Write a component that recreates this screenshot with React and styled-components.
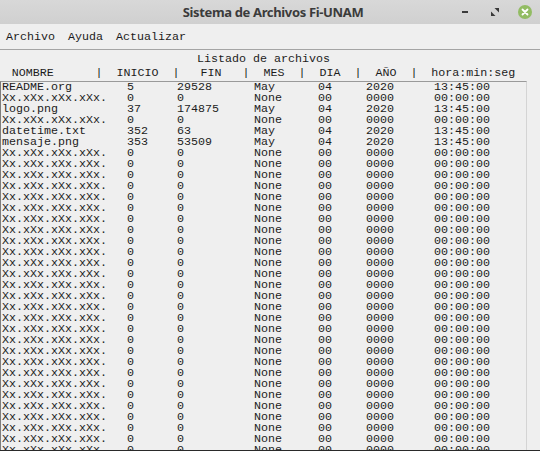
import React from 'react'
import styled, { createGlobalStyle } from 'styled-components'

const Global = createGlobalStyle`
  html, body {
    margin: 0;
    padding: 0;
    background: #efefef;
  }
  #root {
    width: 540px;
    height: 451px;
    overflow: hidden;
  }
`

const Window = styled.div`
  width: 540px;
  height: 451px;
  box-sizing: border-box;
  display: flex;
  flex-direction: column;
  background: #efefef;
  border-bottom: 1px solid #2a2a2a;
  font-family: "Liberation Mono", monospace;
  font-size: 11.67px;
  color: #1c1c1c;
`

const TitleBar = styled.div`
  height: 24px;
  flex: none;
  display: flex;
  align-items: center;
  justify-content: center;
  position: relative;
  background: linear-gradient(#d8d8d8, #d0d0d0);
`

const Title = styled.div`
  font-family: "Noto Sans", sans-serif;
  font-weight: 700;
  font-size: 13px;
  color: #3b3b3b;
  letter-spacing: -0.35px;
  padding-left: 6px;
`

const Controls = styled.div`
  position: absolute;
  right: 0;
  top: 0;
  height: 24px;
  display: flex;
`

const ControlButton = styled.div`
  width: 30px;
  height: 24px;
  display: flex;
  align-items: center;
  justify-content: center;
`

const Minimize = styled.span`
  width: 6px;
  height: 2px;
  background: #3a3a3a;
`

const Close = styled.span`
  width: 14px;
  height: 14px;
  border-radius: 50%;
  background: #92bc63;
  display: flex;
  align-items: center;
  justify-content: center;
`

const MenuBar = styled.div`
  height: 25px;
  flex: none;
  display: flex;
  align-items: center;
  gap: 1px;
  border-bottom: 1px solid #a4a4a4;
`

const MenuItem = styled.span`
  padding: 0 6px;
`

const Content = styled.div`
  width: 527px;
  flex: 1;
  min-height: 0;
  display: flex;
  flex-direction: column;
  padding-top: 2px;
`

const Caption = styled.div`
  height: 14px;
  line-height: 14px;
  text-align: center;
  white-space: pre;
`

const Header = styled(Caption)`
  margin-bottom: 1px;
`

const ListBox = styled.div`
  flex: 1;
  min-height: 0;
  overflow: hidden;
  border-top: 1px solid #9a9a9a;
  border-left: 1px solid #7d7d7d;
  border-right: 1px solid #d4d4d4;
  background: #efefef;
`

const Row = styled.div`
  height: 11px;
  line-height: 11px;
  padding-left: 1px;
  display: grid;
  grid-template-columns: 125px 50px 77px 64px 48px 68px auto;
  white-space: pre;
`

const header = 'NOMBRE      |  INICIO  |   FIN   |  MES  |  DIA  |  AÑO  |  hora:min:seg'

const empty = ['Xx.xXx.xXx.xXx.', '0', '0', 'None', '00', '0000', '00:00:00']
const files = [
  ['README.org', '5', '29528', 'May', '04', '2020', '13:45:00'],
  empty,
  ['logo.png', '37', '174875', 'May', '04', '2020', '13:45:00'],
  empty,
  ['datetime.txt', '352', '63', 'May', '04', '2020', '13:45:00'],
  ['mensaje.png', '353', '53509', 'May', '04', '2020', '13:45:00'],
  ...Array(30).fill(empty),
]

const App = () => {
  return (
    <Window>
      <Global />
      <TitleBar>
        <Title>Sistema de Archivos Fi-UNAM</Title>
        <Controls>
          <ControlButton>
            <Minimize />
          </ControlButton>
          <ControlButton>
            <svg width="8" height="8" viewBox="0 0 8 8">
              <path d="M3.5 0H8v4.5z" fill="#3a3a3a" />
              <path d="M0 3.5V8h4.5z" fill="#3a3a3a" />
            </svg>
          </ControlButton>
          <ControlButton>
            <Close>
              <svg width="8" height="8" viewBox="0 0 8 8">
                <path d="M1.5 1.5l5 5M6.5 1.5l-5 5" stroke="#fff" strokeWidth="1.8" strokeLinecap="round" />
              </svg>
            </Close>
          </ControlButton>
        </Controls>
      </TitleBar>
      <MenuBar>
        <MenuItem>Archivo</MenuItem>
        <MenuItem>Ayuda</MenuItem>
        <MenuItem>Actualizar</MenuItem>
      </MenuBar>
      <Content>
        <Caption>Listado de archivos</Caption>
        <Header>{header}</Header>
        <ListBox>
          {files.map((f, i) => (
            <Row key={i}>
              {f.map((c, j) => <span key={j}>{c}</span>)}
            </Row>
          ))}
        </ListBox>
      </Content>
    </Window>
  )
}

export default App
